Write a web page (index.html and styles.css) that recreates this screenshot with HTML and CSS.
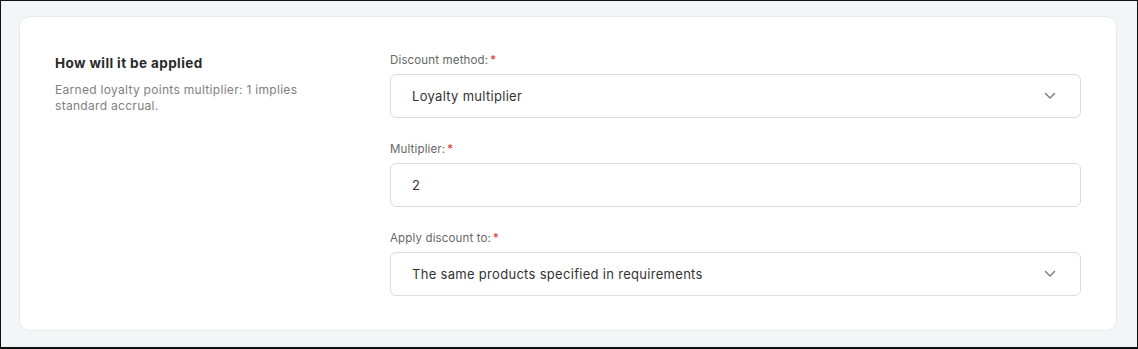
FILE: index.html
```html
<!DOCTYPE html>
<html lang="en">
  <head>
    <meta charset="UTF-8" />
    <meta name="viewport" content="width=device-width, initial-scale=1.0" />
    <title>Discount settings</title>
    <link rel="stylesheet" href="styles.css">
  </head>
  <body>
    <div class="frame">
      <div class="card">
        <div class="intro">
          <h2>How will it be applied</h2>
          <p>Earned loyalty points multiplier: 1 implies standard accrual.</p>
        </div>
        <div class="fields">
          <div class="field">
            <label>Discount method:<span class="req">*</span></label>
            <div class="box select">
              <span>Loyalty multiplier</span>
              <svg class="chev" width="12" height="8" viewBox="0 0 12 8">
                <path d="M1.5 1.5 L6 6 L10.5 1.5" fill="none" stroke="#777" stroke-width="1.4" stroke-linecap="round" stroke-linejoin="round" />
              </svg>
            </div>
          </div>
          <div class="field">
            <label>Multiplier:<span class="req">*</span></label>
            <div class="box">
              <span>2</span>
            </div>
          </div>
          <div class="field">
            <label>Apply discount to:<span class="req">*</span></label>
            <div class="box select">
              <span>The same products specified in requirements</span>
              <svg class="chev" width="12" height="8" viewBox="0 0 12 8">
                <path d="M1.5 1.5 L6 6 L10.5 1.5" fill="none" stroke="#777" stroke-width="1.4" stroke-linecap="round" stroke-linejoin="round" />
              </svg>
            </div>
          </div>
        </div>
      </div>
    </div>
  </body>
</html>
```

FILE: styles.css
```css
* {
  padding: 0;
  margin: 0;
  box-sizing: border-box;
  font-family: "Inter", "Noto Sans", sans-serif;
}
body {
  background: #000;
  width: 1138px;
  height: 349px;
}
/* screenshot has a thin dark frame round it */
.frame {
  height: 100%;
  border: 1px solid #111;
  border-bottom-width: 2px;
  background: #f3f5f6;
  padding: 15px 20px 16px 18px;
}
.card {
  height: 100%;
  background: #fff;
  border: 1px solid #e8eaeb;
  border-radius: 11px;
  padding: 36px 35px 34px 35px;
  display: flex;
}
.intro {
  width: 335px;
  flex-shrink: 0;
  padding-top: 1px;
}
.intro h2 {
  font-size: 13.5px;
  font-weight: 700;
  letter-spacing: 0.4px;
  color: #2a2a2a;
  line-height: 18px;
  margin-bottom: 10px;
}
.intro p {
  font-size: 12px;
  letter-spacing: 0.3px;
  color: #808080;
  line-height: 16px;
  width: 260px;
}
.fields {
  flex: 1;
  display: flex;
  flex-direction: column;
  gap: 24px;
}
.field label {
  display: block;
  font-size: 11.5px;
  letter-spacing: 0.15px;
  color: #666;
  line-height: 14px;
  margin-bottom: 7px;
}
.req {
  color: #d9342b;
  margin-left: 2px;
}
.box {
  height: 44px;
  border: 1px solid #dcdcdc;
  border-radius: 6px;
  display: flex;
  align-items: center;
  justify-content: space-between;
  padding: 0 24px 0 21px;
  font-size: 13px;
  letter-spacing: 0.3px;
  color: #333;
}
.chev {
  display: block;
}
```
